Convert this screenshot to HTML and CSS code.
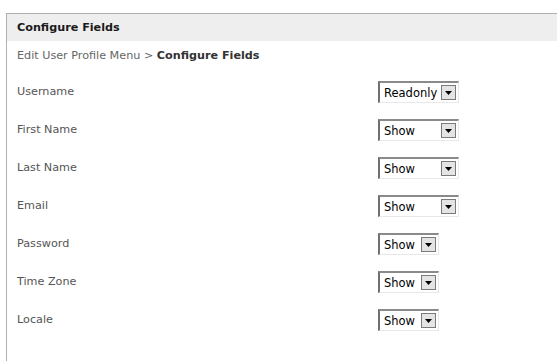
FILE: index.html
```html
<!DOCTYPE html>
<html lang="en">
<head>
<meta charset="UTF-8" />
<title>Configure Fields</title>
<link rel="stylesheet" href="styles.css">
</head>
<body>

<div class="panel">
  <h2 class="panel-title">Configure Fields</h2>
  <div class="crumbs">Edit User Profile Menu &gt; <strong>Configure Fields</strong></div>

  <ul class="field-list">
    <li><span class="label">Username</span><span class="dropdown wide"><span class="value">Readonly</span><span class="arrow"><svg width="7" height="4" viewBox="0 0 7 4"><path d="M0 0h7L3.5 4z"/></svg></span></span></li>
    <li><span class="label">First Name</span><span class="dropdown wide"><span class="value">Show</span><span class="arrow"><svg width="7" height="4" viewBox="0 0 7 4"><path d="M0 0h7L3.5 4z"/></svg></span></span></li>
    <li><span class="label">Last Name</span><span class="dropdown wide"><span class="value">Show</span><span class="arrow"><svg width="7" height="4" viewBox="0 0 7 4"><path d="M0 0h7L3.5 4z"/></svg></span></span></li>
    <li><span class="label">Email</span><span class="dropdown wide"><span class="value">Show</span><span class="arrow"><svg width="7" height="4" viewBox="0 0 7 4"><path d="M0 0h7L3.5 4z"/></svg></span></span></li>
    <li><span class="label">Password</span><span class="dropdown"><span class="value">Show</span><span class="arrow"><svg width="7" height="4" viewBox="0 0 7 4"><path d="M0 0h7L3.5 4z"/></svg></span></span></li>
    <li><span class="label">Time Zone</span><span class="dropdown"><span class="value">Show</span><span class="arrow"><svg width="7" height="4" viewBox="0 0 7 4"><path d="M0 0h7L3.5 4z"/></svg></span></span></li>
    <li><span class="label">Locale</span><span class="dropdown"><span class="value">Show</span><span class="arrow"><svg width="7" height="4" viewBox="0 0 7 4"><path d="M0 0h7L3.5 4z"/></svg></span></span></li>
  </ul>
</div>

</body>
</html>
```

FILE: styles.css
```css
body {
  margin: 0;
  padding: 13px 0 0 6px;
  background: #fff;
  font-family: "DejaVu Sans", Verdana, sans-serif;
  font-size: 11.2px;
  color: #555;
  overflow: hidden;
}

.panel {
  box-sizing: border-box;
  border-top: 1px solid #b0b0b0;
  border-left: 1px solid #b0b0b0;
  height: 348px;
}

.panel-title {
  margin: 0;
  height: 27px;
  line-height: 27px;
  padding-left: 10px;
  background: #eeeeee;
  font-size: 11.2px;
  font-weight: bold;
  color: #1a1a1a;
}

.crumbs {
  padding: 8px 0 0 10px;
  height: 20px;
  line-height: 14px;
  color: #666;
}

.crumbs strong {
  color: #333;
}

.field-list {
  list-style: none;
  margin: 0;
  padding: 16px 0 0 10px;
}

.field-list li {
  display: flex;
  height: 38px;
}

.label {
  width: 361px;
  line-height: 14px;
}

/* old windows style select */
.dropdown {
  box-sizing: border-box;
  display: flex;
  align-items: center;
  width: 61px;
  height: 22px;
  margin-top: -4px;
  padding: 0 2px 0 4px;
  background: #fff;
  border-top: 2px solid #8a8a8a;
  border-left: 2px solid #707070;
  border-right: 1px solid #e8e8e8;
  border-bottom: 1px solid #e8e8e8;
  font-size: 11.5px;
  color: #000;
}

.dropdown.wide {
  width: 81px;
}

.value {
  flex: 1;
  line-height: 16px;
}

.arrow {
  box-sizing: border-box;
  display: flex;
  align-items: center;
  justify-content: center;
  width: 15px;
  height: 15px;
  margin-left: 2px;
  background: #e4e4e4;
  border: 1px solid #7a7a7a;
}

.arrow svg {
  fill: #000;
}
```
